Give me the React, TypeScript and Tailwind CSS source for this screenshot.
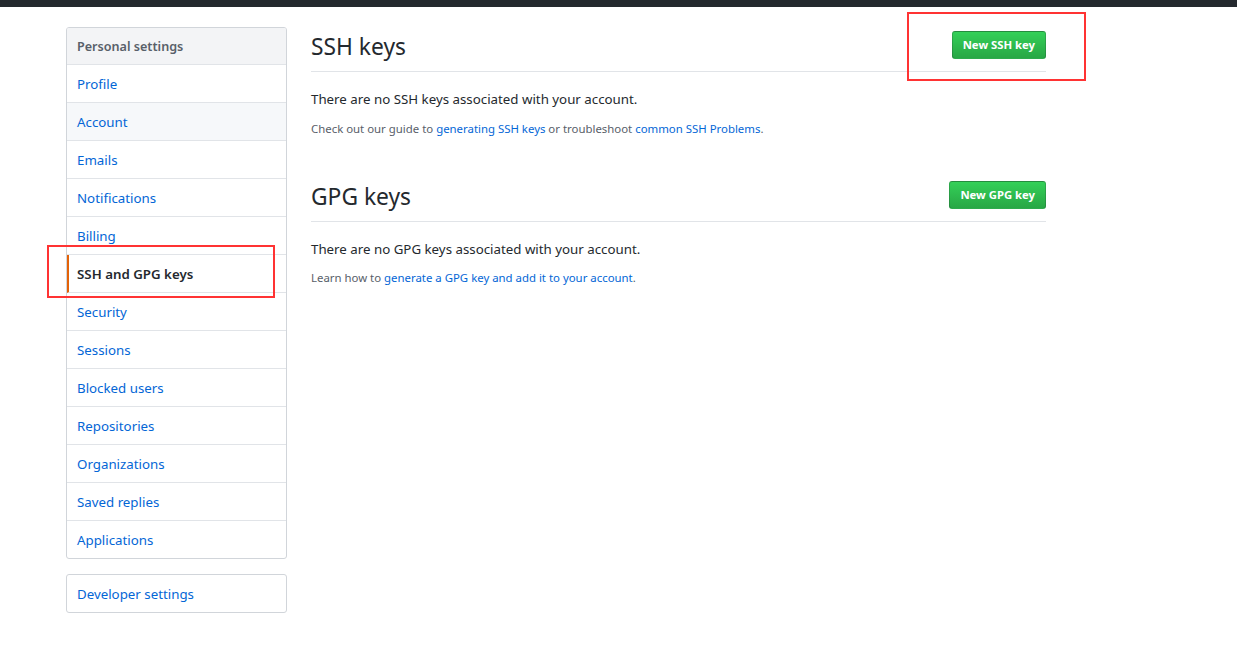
import clsx from "clsx";

const menu = [
    "Profile",
    "Account",
    "Emails",
    "Notifications",
    "Billing",
    "SSH and GPG keys",
    "Security",
    "Sessions",
    "Blocked users",
    "Repositories",
    "Organizations",
    "Saved replies",
    "Applications",
];

const Subhead = ({ title, button }: { title: string; button: string }) => (
    <div className="flex items-center justify-between pb-2 border-b border-[#e1e4e8]">
        <h2 className="pt-[3px] text-[22.8px] leading-[33px] font-normal text-[#24292e]">{title}</h2>
        <button className="h-[28px] px-[10px] rounded-[3px] border border-[rgba(27,31,35,0.2)] bg-gradient-to-b from-[#34d058] to-[#28a745] text-white text-[11.3px] font-bold leading-[20px]">
            {button}
        </button>
    </div>
);

const App = () => {
    return (
        <div className="relative min-h-[651px] bg-white font-['Noto_Sans',sans-serif] text-[13.3px] text-[#24292e]">
            {/* top header strip */}
            <div className="h-[7px] bg-[#24292e]" />

            <div className="flex gap-6 ml-[66px] mt-5 w-[980px]">
                {/* settings menu */}
                <div className="w-[221px] shrink-0">
                    <nav className="border border-[#d1d5da] rounded-[3px] overflow-hidden">
                        <div className="bg-[#f3f4f6] px-[10px] pt-[9px] pb-[7px] leading-[20px] text-[12.6px] font-semibold text-[#586069] border-b border-[#e1e4e8]">
                            Personal settings
                        </div>
                        {menu.map((item, index) => (
                            <a
                                key={index}
                                className={clsx(
                                    "block pt-[9px] pb-[7px] leading-[21px] border-[#e1e4e8]",
                                    index < menu.length - 1 && "border-b",
                                    item === "SSH and GPG keys"
                                        ? "border-l-2 border-l-[#e36209] pl-2 font-semibold text-[#24292e]"
                                        : "px-[10px] text-[#0366d6]",
                                    item === "Account" && "bg-[#f6f8fa]"
                                )}
                            >
                                {item}
                            </a>
                        ))}
                    </nav>
                    <nav className="mt-[15px] border border-[#d1d5da] rounded-[3px]">
                        <a className="block px-[10px] pt-[9px] pb-[7px] leading-[21px] text-[#0366d6]">Developer settings</a>
                    </nav>
                </div>

                {/* keys content */}
                <div className="flex-1">
                    <Subhead title="SSH keys" button="New SSH key" />
                    <p className="mt-[17px] leading-[21px]">There are no SSH keys associated with your account.</p>
                    <p className="mt-[10px] text-[11.4px] leading-[18px] text-[#586069]">
                        Check out our guide to <a className="text-[#0366d6]">generating SSH keys</a> or troubleshoot{" "}
                        <a className="text-[#0366d6]">common SSH Problems</a>.
                    </p>

                    <div className="mt-[39px]">
                        <Subhead title="GPG keys" button="New GPG key" />
                        <p className="mt-[17px] leading-[21px]">There are no GPG keys associated with your account.</p>
                        <p className="mt-[9px] text-[11.4px] leading-[18px] text-[#586069]">
                            Learn how to <a className="text-[#0366d6]">generate a GPG key and add it to your account</a>.
                        </p>
                    </div>
                </div>
            </div>

            {/* red annotation boxes */}
            <div className="absolute left-[907px] top-[12px] w-[179px] h-[69px] border-2 border-[#f33]" />
            <div className="absolute left-[47px] top-[245px] w-[228px] h-[53px] border-2 border-[#f33]" />
        </div>
    );
};

export default App;
